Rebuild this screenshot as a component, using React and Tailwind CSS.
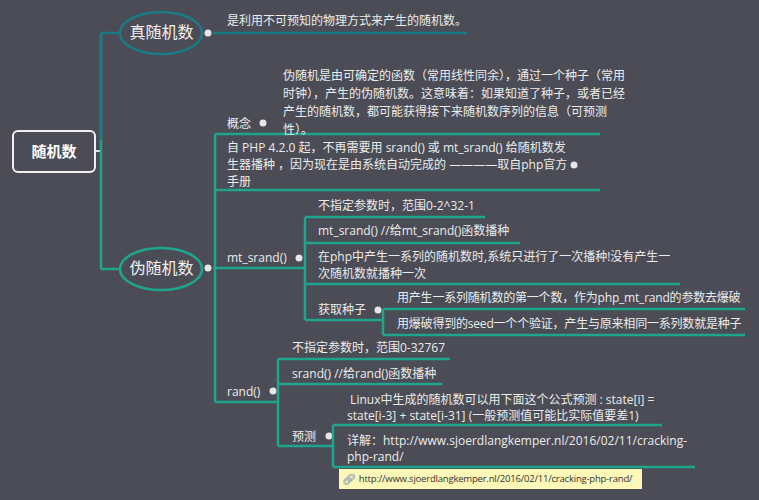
import React from "react";

const T = ({ x, y, w, children, cls = "" }) => (
  <div className={"absolute text-[12px] leading-[16px] text-[#ececec] " + (w ? "" : "whitespace-nowrap ") + cls} style={{ left: x, top: y, width: w }}>
    {children}
  </div>
);

const G = "#1fa58d";
const D = "#1a7a86";

export default function App() {
  const L = (x1, y1, x2, y2, c = G, w = 2.5) => <line x1={x1} y1={y1} x2={x2} y2={y2} stroke={c} strokeWidth={w} />;
  const dot = (x, y) => <circle cx={x} cy={y} r="3.5" fill="#e6e6e6" />;
  return (
    <div className="relative w-[759px] h-[500px] overflow-hidden bg-[#4b4c56]" style={{ fontFamily: '"Open Sans","Noto Sans CJK SC",sans-serif' }}>
      <svg className="absolute inset-0" width="759" height="500">
        {L(95, 151, 101, 151, "#ddd", 2)}
        {L(101, 33, 101, 269)}
        {L(101, 33, 120, 33, D)}
        {L(101, 269, 120, 269)}
        {L(101, 33, 101, 140, D)}
        <ellipse cx="161" cy="33" rx="41" ry="21" fill="#4b4c56" stroke={D} strokeWidth="2.5" />
        <ellipse cx="161" cy="269" rx="41" ry="21" fill="#4b4c56" stroke={G} strokeWidth="2.5" />
        {dot(208, 33)}
        {L(213, 33, 467, 33, D)}
        {dot(208, 268)}
        {L(213, 268, 215, 268)}
        {L(215, 134, 215, 402)}
        {L(215, 134, 600, 134)}
        {L(215, 190, 600, 190)}
        {dot(263, 123)}
        {dot(574, 165)}
        {L(215, 268, 305, 268)}
        {dot(299, 258)}
        {L(305, 217, 305, 320)}
        {L(305, 217, 485, 217)}
        {L(305, 243, 520, 243)}
        {L(305, 284, 680, 284)}
        {L(305, 320, 383, 320)}
        {dot(378, 310)}
        {L(383, 309, 383, 335)}
        {L(383, 309, 745, 309)}
        {L(383, 335, 745, 335)}
        {L(215, 402, 278, 402)}
        {dot(273, 391)}
        {L(278, 359, 278, 446)}
        {L(278, 359, 450, 359)}
        {L(278, 384, 442, 384)}
        {L(278, 446, 333, 446)}
        {dot(329, 436)}
        {L(333, 425, 333, 467)}
        {L(333, 425, 662, 425)}
        {L(333, 467, 695, 467)}
      </svg>
      <div className="absolute left-[12px] top-[130px] w-[84px] h-[43px] rounded-[6px] border-2 border-[#f0f0f0] bg-[#4b4c56] flex items-center justify-center text-white font-bold text-[15px]">随机数</div>
      <div className="absolute left-[120px] top-[20px] w-[83px] text-center text-[16px] text-[#f0f0f0]">真随机数</div>
      <div className="absolute left-[120px] top-[256px] w-[83px] text-center text-[16px] text-[#f0f0f0]">伪随机数</div>
      <T x={227} y={13}>是利用不可预知的物理方式来产生的随机数。</T>
      <T x={227} y={116}>概念</T>
      <T x={283} y={67} w={350} cls="leading-[18px]">伪随机是由可确定的函数（常用线性同余），通过一个种子（常用时钟），产生的伪随机数。这意味着：如果知道了种子，或者已经产生的随机数，都可能获得接下来随机数序列的信息（可预测性）。</T>
      <T x={227} y={139} w={345} cls="leading-[17px]">自 PHP 4.2.0 起，不再需要用 srand() 或 mt_srand() 给随机数发生器播种 ，因为现在是由系统自动完成的 ————取自php官方手册</T>
      <T x={227} y={250}>mt_srand()</T>
      <T x={318} y={198}>不指定参数时，范围0-2^32-1</T>
      <T x={318} y={223}>mt_srand() //给mt_srand()函数播种</T>
      <T x={318} y={248} w={360} cls="leading-[17px]">在php中产生一系列的随机数时,系统只进行了一次播种!没有产生一次随机数就播种一次</T>
      <T x={318} y={302}>获取种子</T>
      <T x={397} y={290} cls="tracking-[-0.2px]">用产生一系列随机数的第一个数，作为php_mt_rand的参数去爆破</T>
      <T x={397} y={316} cls="tracking-[-0.2px]">用爆破得到的seed一个个验证，产生与原来相同一系列数就是种子</T>
      <T x={227} y={384}>rand()</T>
      <T x={292} y={340}>不指定参数时，范围0-32767</T>
      <T x={292} y={366}>srand() //给rand()函数播种</T>
      <T x={292} y={429}>预测</T>
      <T x={347} y={392} w={330} cls="leading-[16px]">&nbsp;Linux中生成的随机数可以用下面这个公式预测 : state[i] = state[i-3] + state[i-31] (一般预测值可能比实际值要差1)</T>
      <T x={347} y={433} w={345} cls="leading-[16px] break-all">详解：http://www.sjoerdlangkemper.nl/2016/02/11/cracking-php-rand/</T>
      <div className="absolute left-[339px] top-[469px] w-[303px] h-[20px] bg-[#fdf7b8] flex items-center gap-[3px] px-[3px] text-[9.5px] whitespace-nowrap text-[#333] tracking-[-0.2px]">
        <span className="text-[#3a6fc4] text-[11px]">🔗︎</span>
        <span>http://www.sjoerdlangkemper.nl/2016/02/11/cracking-php-rand/</span>
      </div>
    </div>
  );
}
